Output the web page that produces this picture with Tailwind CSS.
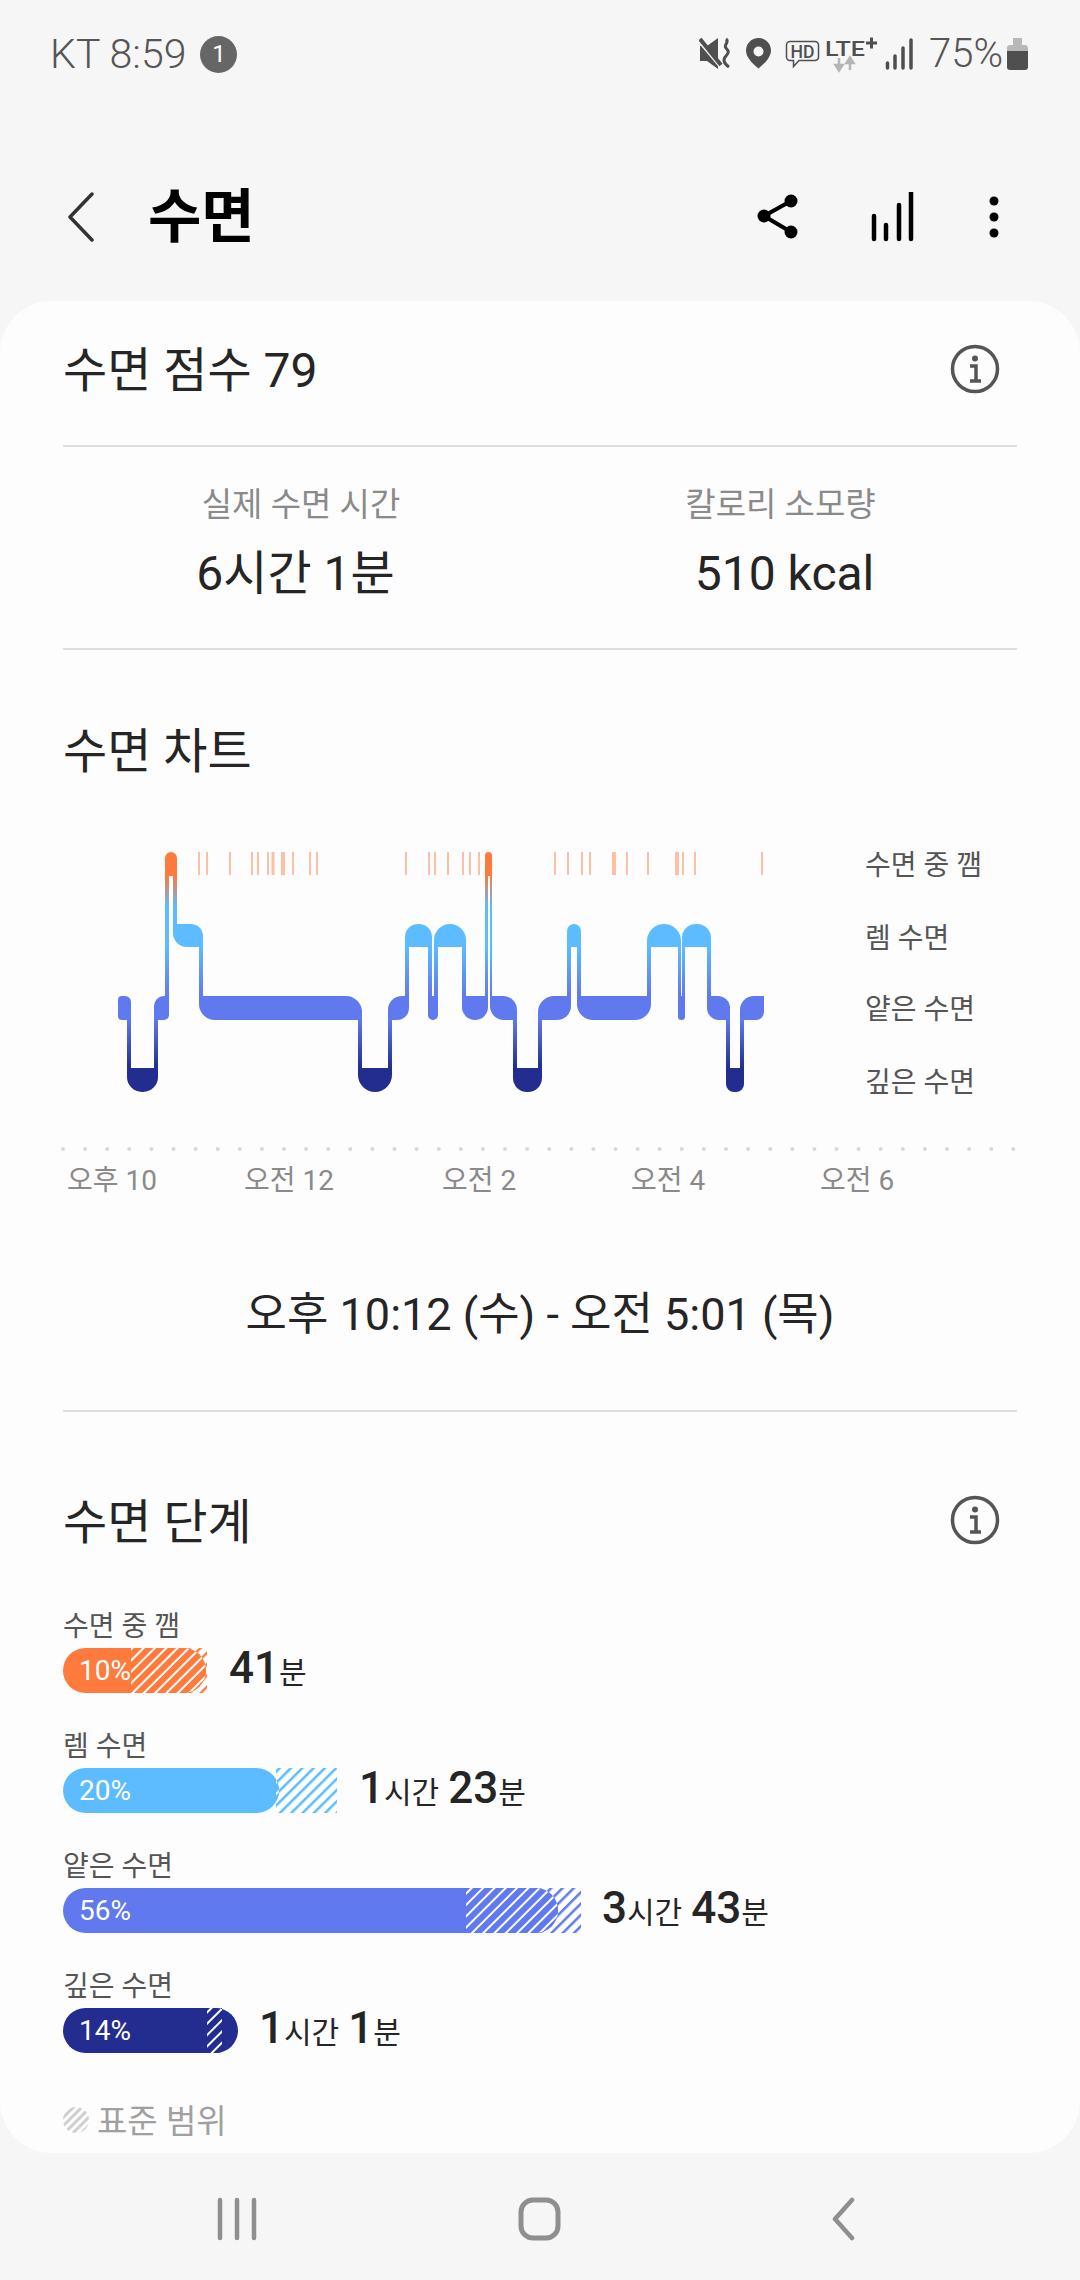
<!DOCTYPE html>
<html lang="ko">
<head>
  <meta charset="UTF-8"/>
  <meta name="viewport" content="width=device-width, initial-scale=1.0"/>
  <title>수면</title>
  <script src="https://cdn.jsdelivr.net/npm/@tailwindcss/browser@4"></script>
</head>
<body class="bg-[#f6f6f6] [font-family:Roboto,'Noto_Sans_CJK_KR',sans-serif]">
<div class="w-[1080px] h-[2280px] overflow-hidden flex flex-col">

  <!-- Status bar -->
  <div class="h-[108px] shrink-0 flex items-center text-[#555] text-[41px] font-light pl-[50px]">
    <span class="leading-none">KT 8:59</span>
    <span class="ml-[14px] w-[37px] h-[37px] rounded-full bg-[#666] text-white text-[24px] font-normal flex items-center justify-center">1</span>
    <svg class="ml-auto block" width="216" height="108" viewBox="700 0 216 108">
      <path d="M701 46h7l11-8v31l-11-8h-7z" fill="#4f4f4f"/>
      <path d="M698 38l26 31" stroke="#f6f6f6" stroke-width="4"/>
      <path d="M701 39l21 26" stroke="#4f4f4f" stroke-width="4"/>
      <path d="M727 39c4 3-3 6 0 9s3 5 0 8-3 7 3 11" fill="none" stroke="#4f4f4f" stroke-width="3"/>
      <path fill-rule="evenodd" d="M759.500 38c-7 0-12.500 5.500-12.500 12.500 0 7 7 13.500 12.500 18 5.500-4.500 12.500-11 12.500-18 0-7-5.500-12.500-12.500-12.500zm0 8.500a5 5 0 1 1 0 10 5 5 0 0 1 0-10z" fill="#4f4f4f"/>
      <path d="M791 41.500h25a3.500 3.500 0 0 1 3.500 3.500v12a3.500 3.500 0 0 1-3.500 3.500h-16l-5.500 6v-6h-3.500a3.500 3.500 0 0 1-3.500-3.500v-12a3.500 3.500 0 0 1 3.500-3.500z" fill="none" stroke="#4f4f4f" stroke-width="1.500"/>
      <text x="803.500" y="57.500" text-anchor="middle" font-size="18" font-weight="500" fill="#4f4f4f" textLength="24" lengthAdjust="spacingAndGlyphs">HD</text>
      <text x="826" y="56" font-size="21" font-weight="500" fill="#4f4f4f" textLength="40" lengthAdjust="spacingAndGlyphs">LTE</text>
      <path d="M867 43h11M872.500 37.500v11" stroke="#4f4f4f" stroke-width="3"/>
      <path d="M840 58v7h-3.500l3.500 5.500 3.500-5.500h-3.500M851 70v-7h-3.500l3.500-5.500 3.500 5.500h-3.500" stroke="#b5b5b5" stroke-width="2.500" fill="#b5b5b5"/>
      <path d="M888.500 63v5M896 56v12M904 48v20M912 40v28" stroke="#4f4f4f" stroke-width="3.500" stroke-linecap="round"/>
    </svg>
    <span class="ml-[14px] w-[72px] leading-none text-[40px]">75%</span>
    <svg class="ml-[6px] mr-[52px] block" width="21" height="32" viewBox="0 0 21 32">
      <path d="M6 0h9v7h3a3 3 0 0 1 3 3v3H0v-3a3 3 0 0 1 3-3h3z" fill="#b8b8b8"/>
      <path d="M0 13h21v16a3 3 0 0 1-3 3H3a3 3 0 0 1-3-3z" fill="#4f4f4f"/>
    </svg>
  </div>

  <!-- App bar -->
  <div class="h-[193px] shrink-0 flex items-center pt-[24px]">
    <svg class="ml-[66px] block" width="32" height="50" viewBox="0 0 32 50">
      <path d="M27 2L5 25l22 23" transform="translate(-1 0)" fill="none" stroke="#333" stroke-width="3.500" stroke-linecap="round" stroke-linejoin="round"/>
    </svg>
    <span class="ml-[50px] text-[58px] font-bold text-black leading-none">수면</span>
    <svg class="ml-auto mr-[63px] block" width="50" height="50" viewBox="755 191 50 50">
      <path d="M791 200l-27 15 27 16" fill="none" stroke="#000" stroke-width="4"/>
      <circle cx="764" cy="215" r="6.500"/><circle cx="791" cy="200" r="6.500"/><circle cx="791" cy="231" r="6.500"/>
    </svg>
    <svg class="mr-[66px] block" width="50" height="50" viewBox="868 191 50 50">
      <path d="M874 215v23M886 224v14M899 204v34M911 192v46" stroke="#000" stroke-width="4.500" stroke-linecap="round"/>
    </svg>
    <svg class="mr-[76px] block" width="20" height="50" viewBox="984 191 20 50">
      <circle cx="994" cy="200" r="4.500"/><circle cx="994" cy="216" r="4.500"/><circle cx="994" cy="232" r="4.500"/>
    </svg>
  </div>

  <!-- Card -->
  <div class="h-[1852px] shrink-0 bg-[#fdfdfd] rounded-[52px] px-[63px] text-[#252525]">
    <!-- Score -->
    <div class="h-[146px] pb-[8px] flex items-center justify-between border-b-2 border-[#dedede]">
      <h2 class="text-[48px] font-normal pt-[3px]">수면 점수 79</h2>
      <svg class="block mr-[17px]" width="50" height="50" viewBox="0 0 50 50">
        <circle cx="25" cy="25" r="22.500" fill="none" stroke="#555" stroke-width="3.500"/>
        <circle cx="25" cy="14.500" r="3" fill="#555"/>
        <path d="M20 22h6v15M20 37h11" fill="none" stroke="#555" stroke-width="3.500"/>
      </svg>
    </div>

    <!-- Sleep time / calories -->
    <div class="h-[203px] border-b-2 border-[#dedede] pt-[36px]">
      <div class="-mx-[12px] grid grid-cols-2 text-center">
        <div>
          <div class="text-[33px] leading-[44px] text-[#8a8a8a] ml-[11px]">실제 수면 시간</div>
          <div class="text-[48px] leading-[60px] mt-[17px]">6시간 1분</div>
        </div>
        <div>
          <div class="text-[33px] leading-[44px] text-[#8a8a8a] mr-[8px]">칼로리 소모량</div>
          <div class="text-[48px] leading-[60px] mt-[17px]">510 kcal</div>
        </div>
      </div>
    </div>

    <!-- Chart -->
    <h2 class="text-[48px] font-normal leading-[60px] mt-[72px]">수면 차트</h2>
    <div id="chart" class="-mx-[63px] mt-[48px] h-[370px]"></div>
    <div class="h-[212px] pt-[85px] text-center text-[45px] leading-[60px] border-b-2 border-[#dedede]">오후 10:12 (수) - 오전 5:01 (목)</div>

    <!-- Stages -->
    <div class="h-[108px] mt-[54px] flex items-center justify-between">
      <h2 class="text-[48px] font-normal leading-[60px] pt-[0px] mt-[6px]">수면 단계</h2>
      <svg class="block mr-[17px]" width="50" height="50" viewBox="0 0 50 50">
        <circle cx="25" cy="25" r="22.500" fill="none" stroke="#555" stroke-width="3.500"/>
        <circle cx="25" cy="14.500" r="3" fill="#555"/>
        <path d="M20 22h6v15M20 37h11" fill="none" stroke="#555" stroke-width="3.500"/>
      </svg>
    </div>
    <div id="stages" class="mt-[37px] flex flex-col gap-[38px]"></div>
    <div class="mt-[49px] flex items-center text-[33px] leading-[40px] text-[#a0a0a0]">
      <svg class="block -mt-[4px]" width="26" height="26" viewBox="0 0 26 26">
        <defs><pattern id="legendHatch" width="6" height="6" patternUnits="userSpaceOnUse" patternTransform="rotate(45)"><rect width="3" height="6" fill="#cfcfcf"/></pattern></defs>
        <circle cx="13" cy="13" r="13" fill="url(#legendHatch)"/>
      </svg>
      <span class="ml-[8px]">표준 범위</span>
    </div>
  </div>

  <!-- Navigation bar -->
  <div class="flex-1 flex items-center pt-[5px]">
    <svg class="ml-[215px] block" width="44" height="44" viewBox="0 0 44 44">
      <path d="M5 3v38M22 3v38M39 3v38" stroke="#8f8f8f" stroke-width="4.500" stroke-linecap="round"/>
    </svg>
    <svg class="ml-[259px] block" width="44" height="44" viewBox="0 0 44 44">
      <rect x="3" y="3" width="37" height="38" rx="12" fill="none" stroke="#8f8f8f" stroke-width="5"/>
    </svg>
    <svg class="ml-[267px] block" width="30" height="44" viewBox="0 0 30 44">
      <path d="M23 3L6 22l17 19" fill="none" stroke="#8f8f8f" stroke-width="4.500" stroke-linecap="round" stroke-linejoin="round"/>
    </svg>
  </div>
</div>

<script>
  // sleep blocks in page coords: level, x0, x1, corner radii [tl, tr, br, bl]
  const LEVELS = {
    awake: { y: 852, h: 24, color: '#ff7a3d' },
    rem: { y: 924, h: 23, color: '#5cbcff' },
    light: { y: 996, h: 24, color: '#6079ee' },
    deep: { y: 1068, h: 24, color: '#232d8f' }
  };
  const blocks = [
    ['light', 118, 131, [4, 6, 0, 4]],
    ['deep', 127, 158, [0, 0, 15, 15]],
    ['light', 154, 169, [10, 0, 5, 0]],
    ['awake', 165, 177, [6, 6, 0, 0]],
    ['rem', 173, 203, [0, 12, 0, 14]],
    ['light', 199, 362, [0, 16, 0, 16]],
    ['deep', 358, 392, [0, 0, 17, 17]],
    ['light', 388, 409, [14, 0, 12, 0]],
    ['rem', 405, 432, [13, 13, 0, 0]],
    ['light', 428, 438, [0, 0, 5, 5]],
    ['rem', 434, 466, [16, 16, 0, 0]],
    ['light', 462, 488, [0, 0, 13, 13]],
    ['awake', 485, 492, [3.5, 3.5, 0, 0]],
    ['light', 490, 517, [0, 14, 0, 14]],
    ['deep', 513, 542, [0, 0, 14, 14]],
    ['light', 538, 571, [16, 0, 14, 0]],
    ['rem', 567, 581, [7, 7, 0, 0]],
    ['light', 577, 651, [0, 0, 16, 16]],
    ['rem', 647, 681, [17, 17, 0, 0]],
    ['light', 678, 685, [0, 0, 3.5, 3.5]],
    ['rem', 682, 711, [14, 14, 0, 0]],
    ['light', 707, 730, [0, 12, 0, 12]],
    ['deep', 726, 744, [0, 0, 8, 8]],
    ['light', 740, 764, [14, 0, 8, 0]]
  ];
  const ticks = [
    [199, 2], [207, 2], [230, 2], [252, 2], [258, 2], [268, 2], [273, 3], [283, 4], [293, 2], [310, 2], [317, 2],
    [406, 2], [429, 2], [435, 2], [448, 2], [463, 2], [470, 2], [479, 2],
    [555, 2], [568, 2], [582, 2], [590, 2], [614, 4], [627, 2], [648, 2], [677, 4], [683, 2], [695, 2], [762, 2]
  ];

  function blockPath(b) {
    const l = LEVELS[b[0]], x0 = b[1], x1 = b[2], [tl, tr, br, bl] = b[3];
    const y0 = l.y, y1 = l.y + l.h;
    return `<path fill="${l.color}" d="M${x0 + tl} ${y0}H${x1 - tr}A${tr} ${tr} 0 0 1 ${x1} ${y0 + tr}V${y1 - br}A${br} ${br} 0 0 1 ${x1 - br} ${y1}H${x0 + bl}A${bl} ${bl} 0 0 1 ${x0} ${y1 - bl}V${y0 + tl}A${tl} ${tl} 0 0 1 ${x0 + tl} ${y0}Z"/>`;
  }

  function connector(a, b) {
    const la = LEVELS[a[0]], lb = LEVELS[b[0]];
    const top = la.y < lb.y ? la : lb, bottom = la.y < lb.y ? lb : la;
    const y0 = top.y + top.h, y1 = bottom.y;
    return `<rect x="${b[1]}" y="${y0}" width="${a[2] - b[1]}" height="${y1 - y0}" fill="url(#stageFade)"/>`;
  }

  let chart = `<svg class="block" width="1080" height="370" viewBox="0 830 1080 370">
    <defs><linearGradient id="stageFade" gradientUnits="userSpaceOnUse" x1="0" y1="876" x2="0" y2="1068">
      <stop offset="0" stop-color="#ff7a3d"/><stop offset="0.16" stop-color="#5cbcff"/><stop offset="0.37" stop-color="#5cbcff"/>
      <stop offset="0.625" stop-color="#6079ee"/><stop offset="0.75" stop-color="#6079ee"/><stop offset="1" stop-color="#232d8f"/>
    </linearGradient></defs>`;
  ticks.forEach(t => { chart += `<rect x="${t[0] - t[1] / 2}" y="852" width="${t[1]}" height="23" fill="#fbc0a6"/>`; });
  blocks.forEach((b, i) => { if (i) chart += connector(blocks[i - 1], b); });
  blocks.forEach(b => { chart += blockPath(b); });
  for (let i = 0; i < 44; i++) chart += `<circle cx="${63 + i * 22.1}" cy="1149" r="2" fill="#d8d8d8"/>`;
  [['수면 중 깸', 865], ['렘 수면', 938], ['얕은 수면', 1009], ['깊은 수면', 1082]].forEach(t => {
    chart += `<text x="865" y="${t[1] + 10}" font-size="28" fill="#555">${t[0]}</text>`;
  });
  [['오후 10', 67], ['오전 12', 244], ['오전 2', 442], ['오전 4', 631], ['오전 6', 820]].forEach(t => {
    chart += `<text x="${t[1]}" y="1190" font-size="28" fill="#8a8a8a">${t[0]}</text>`;
  });
  document.getElementById('chart').innerHTML = chart + '</svg>';

  // stage bars: x values are relative to the bar's left edge (63)
  const stages = [
    { name: '수면 중 깸', pct: '10%', color: '#ff7a3d', solid: 143, from: 68, to: 144, value: [['41', '분']], gap: 22 },
    { name: '렘 수면', pct: '20%', color: '#5cbcff', solid: 216, from: 213, to: 274, value: [['1', '시간'], ['23', '분']], gap: 22 },
    { name: '얕은 수면', pct: '56%', color: '#6079ee', solid: 495, from: 403, to: 518, value: [['3', '시간'], ['43', '분']], gap: 21 },
    { name: '깊은 수면', pct: '14%', color: '#232d8f', solid: 175, from: 144, to: 159, value: [['1', '시간'], ['1', '분']], gap: 21 }
  ];
  document.getElementById('stages').innerHTML = stages.map((s, i) => {
    const w = Math.max(s.solid, s.to);
    const value = s.value.map(v => `<span class="text-[44px] font-medium">${v[0]}</span><span class="text-[30px] mr-[9px]">${v[1]}</span>`).join('');
    return `<div class="h-[82px]">
      <div class="text-[28px] leading-[28px] text-[#555] h-[37px] pt-[2px]">${s.name}</div>
      <div class="flex items-center h-[45px]">
        <div class="relative h-[45px]" style="width:${w}px">
          <svg class="block" width="${w}" height="45">
            <defs>
              <pattern id="out${i}" width="8" height="8" patternUnits="userSpaceOnUse" patternTransform="rotate(45)"><rect width="8" height="8" fill="#fff"/><rect width="2.5" height="8" fill="${s.color}"/></pattern>
              <pattern id="in${i}" width="8" height="8" patternUnits="userSpaceOnUse" patternTransform="rotate(45)"><rect width="8" height="8" fill="${s.color}"/><rect width="2" height="8" fill="#fff"/></pattern>
              <clipPath id="pill${i}"><rect width="${s.solid}" height="45" rx="22.5"/></clipPath>
            </defs>
            <rect x="${s.from}" width="${s.to - s.from}" height="45" fill="url(#out${i})"/>
            <rect width="${s.solid}" height="45" rx="22.5" fill="${s.color}"/>
            <rect x="${s.from}" width="${s.to - s.from}" height="45" fill="url(#in${i})" clip-path="url(#pill${i})"/>
          </svg>
          <span class="absolute left-[16px] top-0 leading-[45px] text-[28px] text-white">${s.pct}</span>
        </div>
        <div class="flex items-baseline leading-[45px] text-[#252525]" style="margin-left:${s.gap}px">${value}</div>
      </div>
    </div>`;
  }).join('');
</script>
</body>
</html>
